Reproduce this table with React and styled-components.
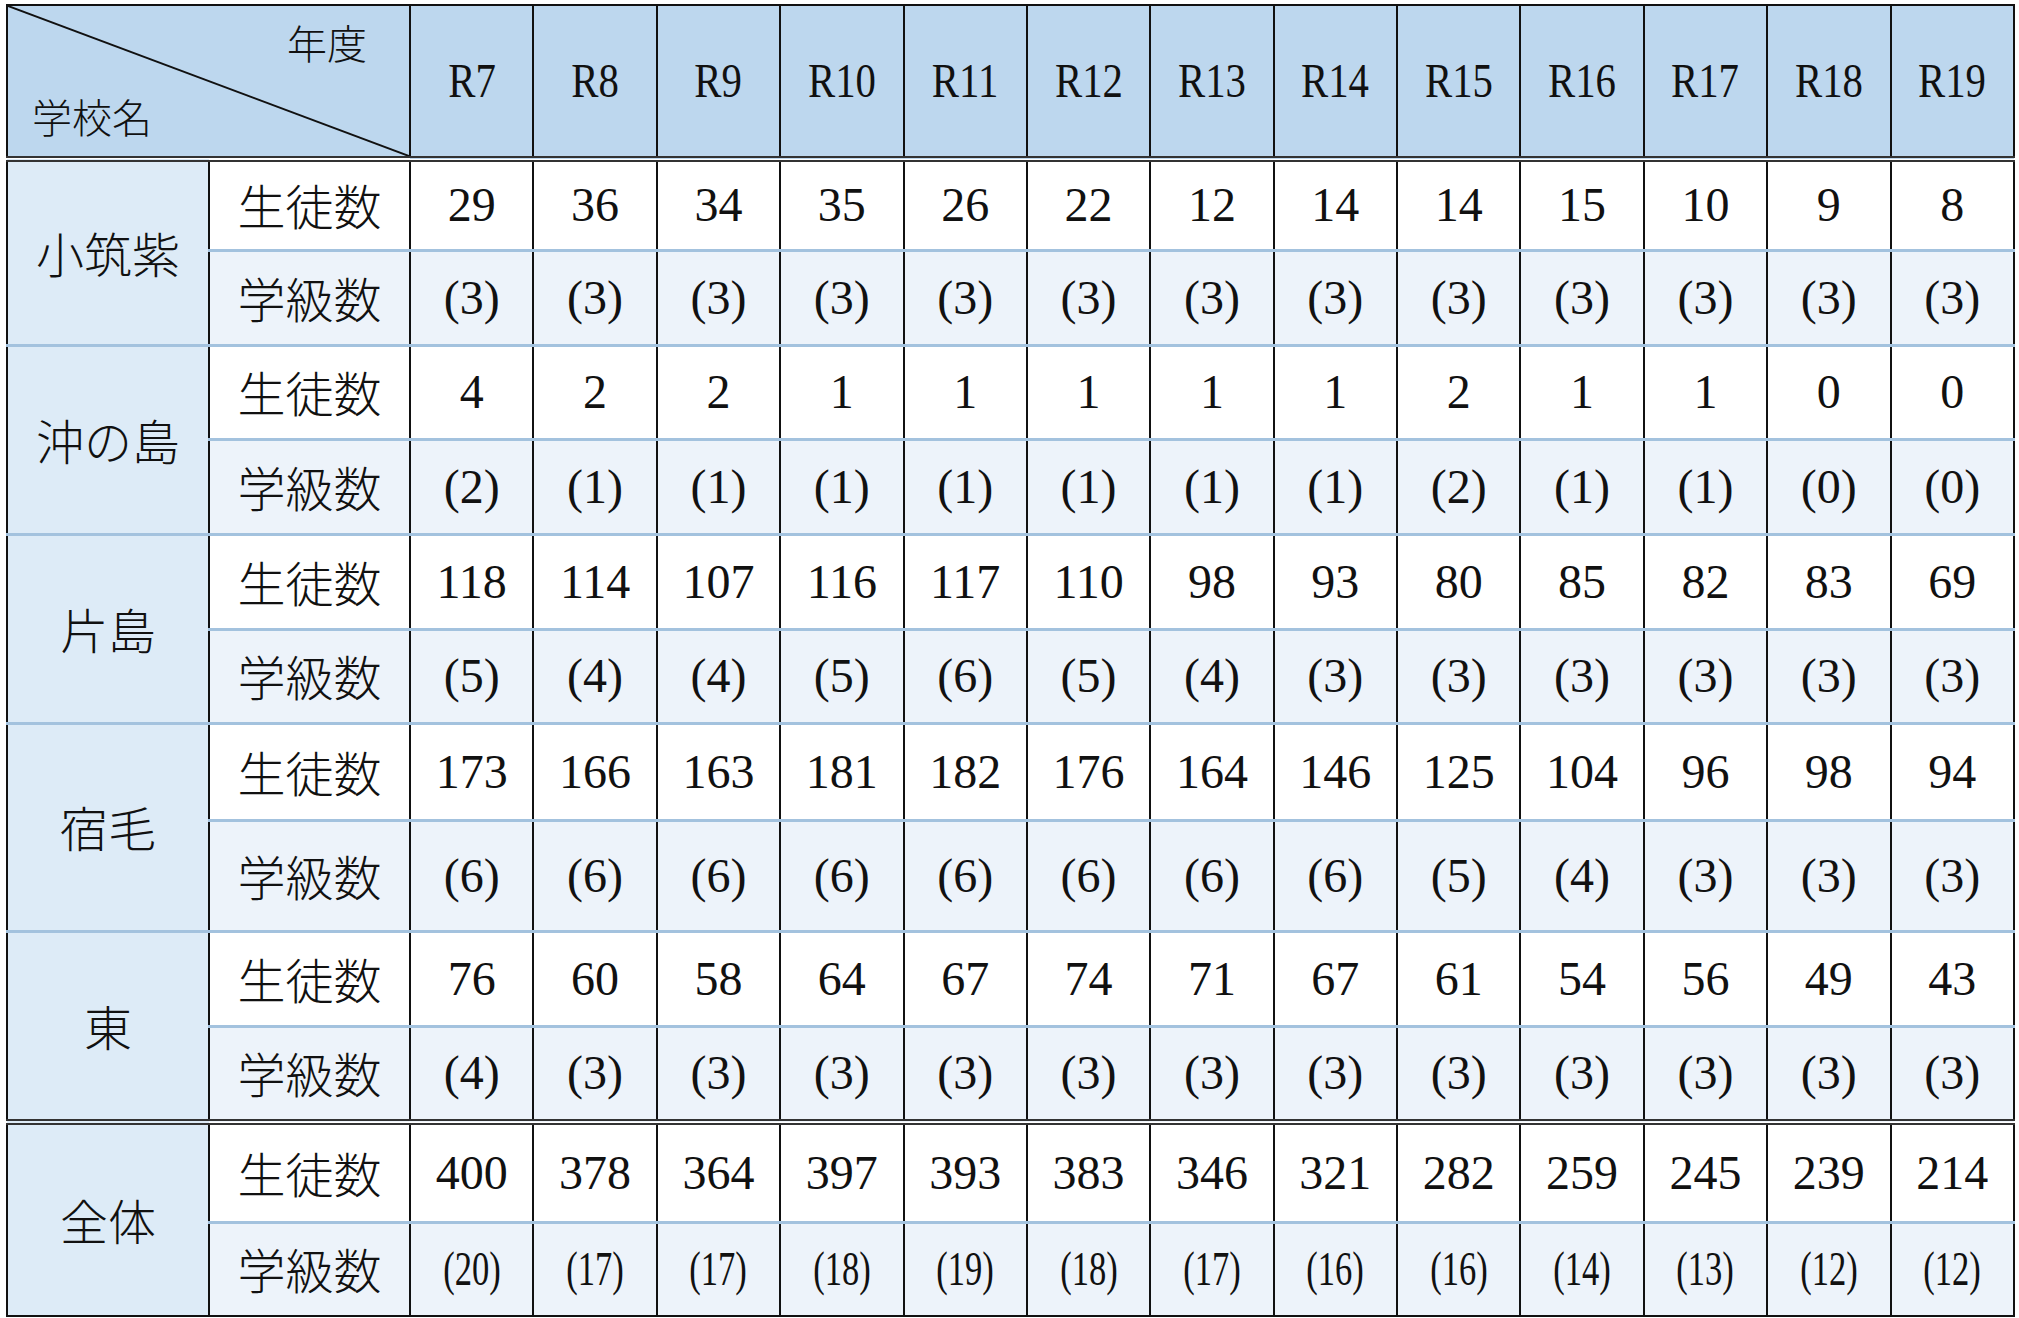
import React from "react";
import styled, { createGlobalStyle } from "styled-components";

const GlobalStyle = createGlobalStyle`
  html, body {
    margin: 0;
    padding: 0;
    background: #ffffff;
  }
  body {
    font-family: "Liberation Serif", "Noto Sans CJK JP", serif;
    color: #111;
  }
`;

const Page = styled.div`
  padding: 4px 0 0 6px;
`;

const Table = styled.table`
  border-collapse: collapse;
  table-layout: fixed;
  width: 2007px;
  border: 2px solid #111;
  font-family: "Liberation Serif", "Noto Sans CJK JP", serif;
  font-size: 48px;
  line-height: 1.2;
  color: #111;
`;

const HeadRow = styled.tr`
  height: 152px;
  background: #bdd7ee;
`;

const Corner = styled.th`
  position: relative;
  padding: 0;
  font-weight: normal;
  border-bottom: 6px double #333;
`;

const Diagonal = styled.svg`
  position: absolute;
  top: 0;
  left: 0;
  width: 100%;
  height: 100%;
`;

const CornerInner = styled.div`
  position: relative;
  height: 150px;
  box-sizing: border-box;
  padding: 16px 42px 20px 24px;
  display: flex;
  flex-direction: column;
  justify-content: space-between;
  font-family: "Noto Sans CJK JP", sans-serif;
  font-weight: 300;
  font-size: 40px;
  line-height: 1;
`;

const CornerLabel = styled.span`
  align-self: ${(p) => (p.end ? "flex-end" : "flex-start")};
`;

const YearHead = styled.th`
  font-weight: normal;
  border-left: 2px solid #111;
  border-bottom: 6px double #333;
  padding: 0;
`;

const Narrow = styled.span`
  display: inline-block;
  transform: scaleX(${(p) => p.scale || 0.85});
`;

const Row = styled.tr`
  height: ${(p) => p.h}px;
  background: ${(p) => (p.shaded ? "#edf3fa" : "#ffffff")};
`;

const topLine = (p) => (p.doubleTop ? "6px double #333" : "none");
const bottomLine = (p) => (p.last ? "2px solid #111" : "3px solid #a3c2de");

const SchoolCell = styled.td`
  background: #ddebf7;
  text-align: center;
  padding: 0;
  font-family: "Noto Sans CJK JP", sans-serif;
  font-weight: 300;
  border-right: 2px solid #111;
  border-top: ${topLine};
  border-bottom: ${bottomLine};
`;

const LabelCell = styled.td`
  text-align: center;
  padding: 0;
  font-family: "Noto Sans CJK JP", sans-serif;
  font-weight: 300;
  border-right: 2px solid #111;
  border-top: ${topLine};
  border-bottom: ${bottomLine};
`;

const ValueCell = styled.td`
  text-align: center;
  padding: 0;
  font-family: "Liberation Serif", serif;
  border-left: 2px solid #111;
  border-top: ${topLine};
  border-bottom: ${bottomLine};
`;

const years = ["R7", "R8", "R9", "R10", "R11", "R12", "R13", "R14", "R15", "R16", "R17", "R18", "R19"];

const schools = [
  {
    name: "小筑紫",
    heights: [91, 95],
    students: [29, 36, 34, 35, 26, 22, 12, 14, 14, 15, 10, 9, 8],
    classes: [3, 3, 3, 3, 3, 3, 3, 3, 3, 3, 3, 3, 3],
  },
  {
    name: "沖の島",
    heights: [94, 95],
    students: [4, 2, 2, 1, 1, 1, 1, 1, 2, 1, 1, 0, 0],
    classes: [2, 1, 1, 1, 1, 1, 1, 1, 2, 1, 1, 0, 0],
  },
  {
    name: "片島",
    heights: [95, 94],
    students: [118, 114, 107, 116, 117, 110, 98, 93, 80, 85, 82, 83, 69],
    classes: [5, 4, 4, 5, 6, 5, 4, 3, 3, 3, 3, 3, 3],
  },
  {
    name: "宿毛",
    heights: [97, 111],
    students: [173, 166, 163, 181, 182, 176, 164, 146, 125, 104, 96, 98, 94],
    classes: [6, 6, 6, 6, 6, 6, 6, 6, 5, 4, 3, 3, 3],
  },
  {
    name: "東",
    heights: [95, 96],
    students: [76, 60, 58, 64, 67, 74, 71, 67, 61, 54, 56, 49, 43],
    classes: [4, 3, 3, 3, 3, 3, 3, 3, 3, 3, 3, 3, 3],
  },
  {
    name: "全体",
    heights: [100, 94],
    total: true,
    students: [400, 378, 364, 397, 393, 383, 346, 321, 282, 259, 245, 239, 214],
    classes: [20, 17, 17, 18, 19, 18, 17, 16, 16, 14, 13, 12, 12],
  },
];

const SchoolRows = ({ school, first }) => {
  const doubleTop = first || school.total;
  const last = school.total;
  return (
    <>
      <Row h={school.heights[0]}>
        <SchoolCell rowSpan={2} doubleTop={doubleTop} last={last}>
          {school.name}
        </SchoolCell>
        <LabelCell doubleTop={doubleTop}>生徒数</LabelCell>
        {school.students.map((n, i) => (
          <ValueCell key={i} doubleTop={doubleTop}>
            {n}
          </ValueCell>
        ))}
      </Row>
      <Row h={school.heights[1]} shaded>
        <LabelCell last={last}>学級数</LabelCell>
        {school.classes.map((n, i) => (
          <ValueCell key={i} last={last}>
            {school.total ? <Narrow scale={0.72}>({n})</Narrow> : `(${n})`}
          </ValueCell>
        ))}
      </Row>
    </>
  );
};

const App = () => {
  return (
    <Page>
      <GlobalStyle />
      <Table>
        <colgroup>
          <col style={{ width: 202 }} />
          <col style={{ width: 201 }} />
          {years.map((y) => (
            <col key={y} style={{ width: 123.38 }} />
          ))}
        </colgroup>
        <thead>
          <HeadRow>
            <Corner colSpan={2}>
              <Diagonal viewBox="0 0 100 100" preserveAspectRatio="none">
                <line x1="0" y1="0" x2="100" y2="100" stroke="#111" strokeWidth="2" vectorEffect="non-scaling-stroke" />
              </Diagonal>
              <CornerInner>
                <CornerLabel end>年度</CornerLabel>
                <CornerLabel>学校名</CornerLabel>
              </CornerInner>
            </Corner>
            {years.map((y) => (
              <YearHead key={y}>
                <Narrow>{y}</Narrow>
              </YearHead>
            ))}
          </HeadRow>
        </thead>
        <tbody>
          {schools.map((s, i) => (
            <SchoolRows key={s.name} school={s} first={i === 0} />
          ))}
        </tbody>
      </Table>
    </Page>
  );
};

export default App;
